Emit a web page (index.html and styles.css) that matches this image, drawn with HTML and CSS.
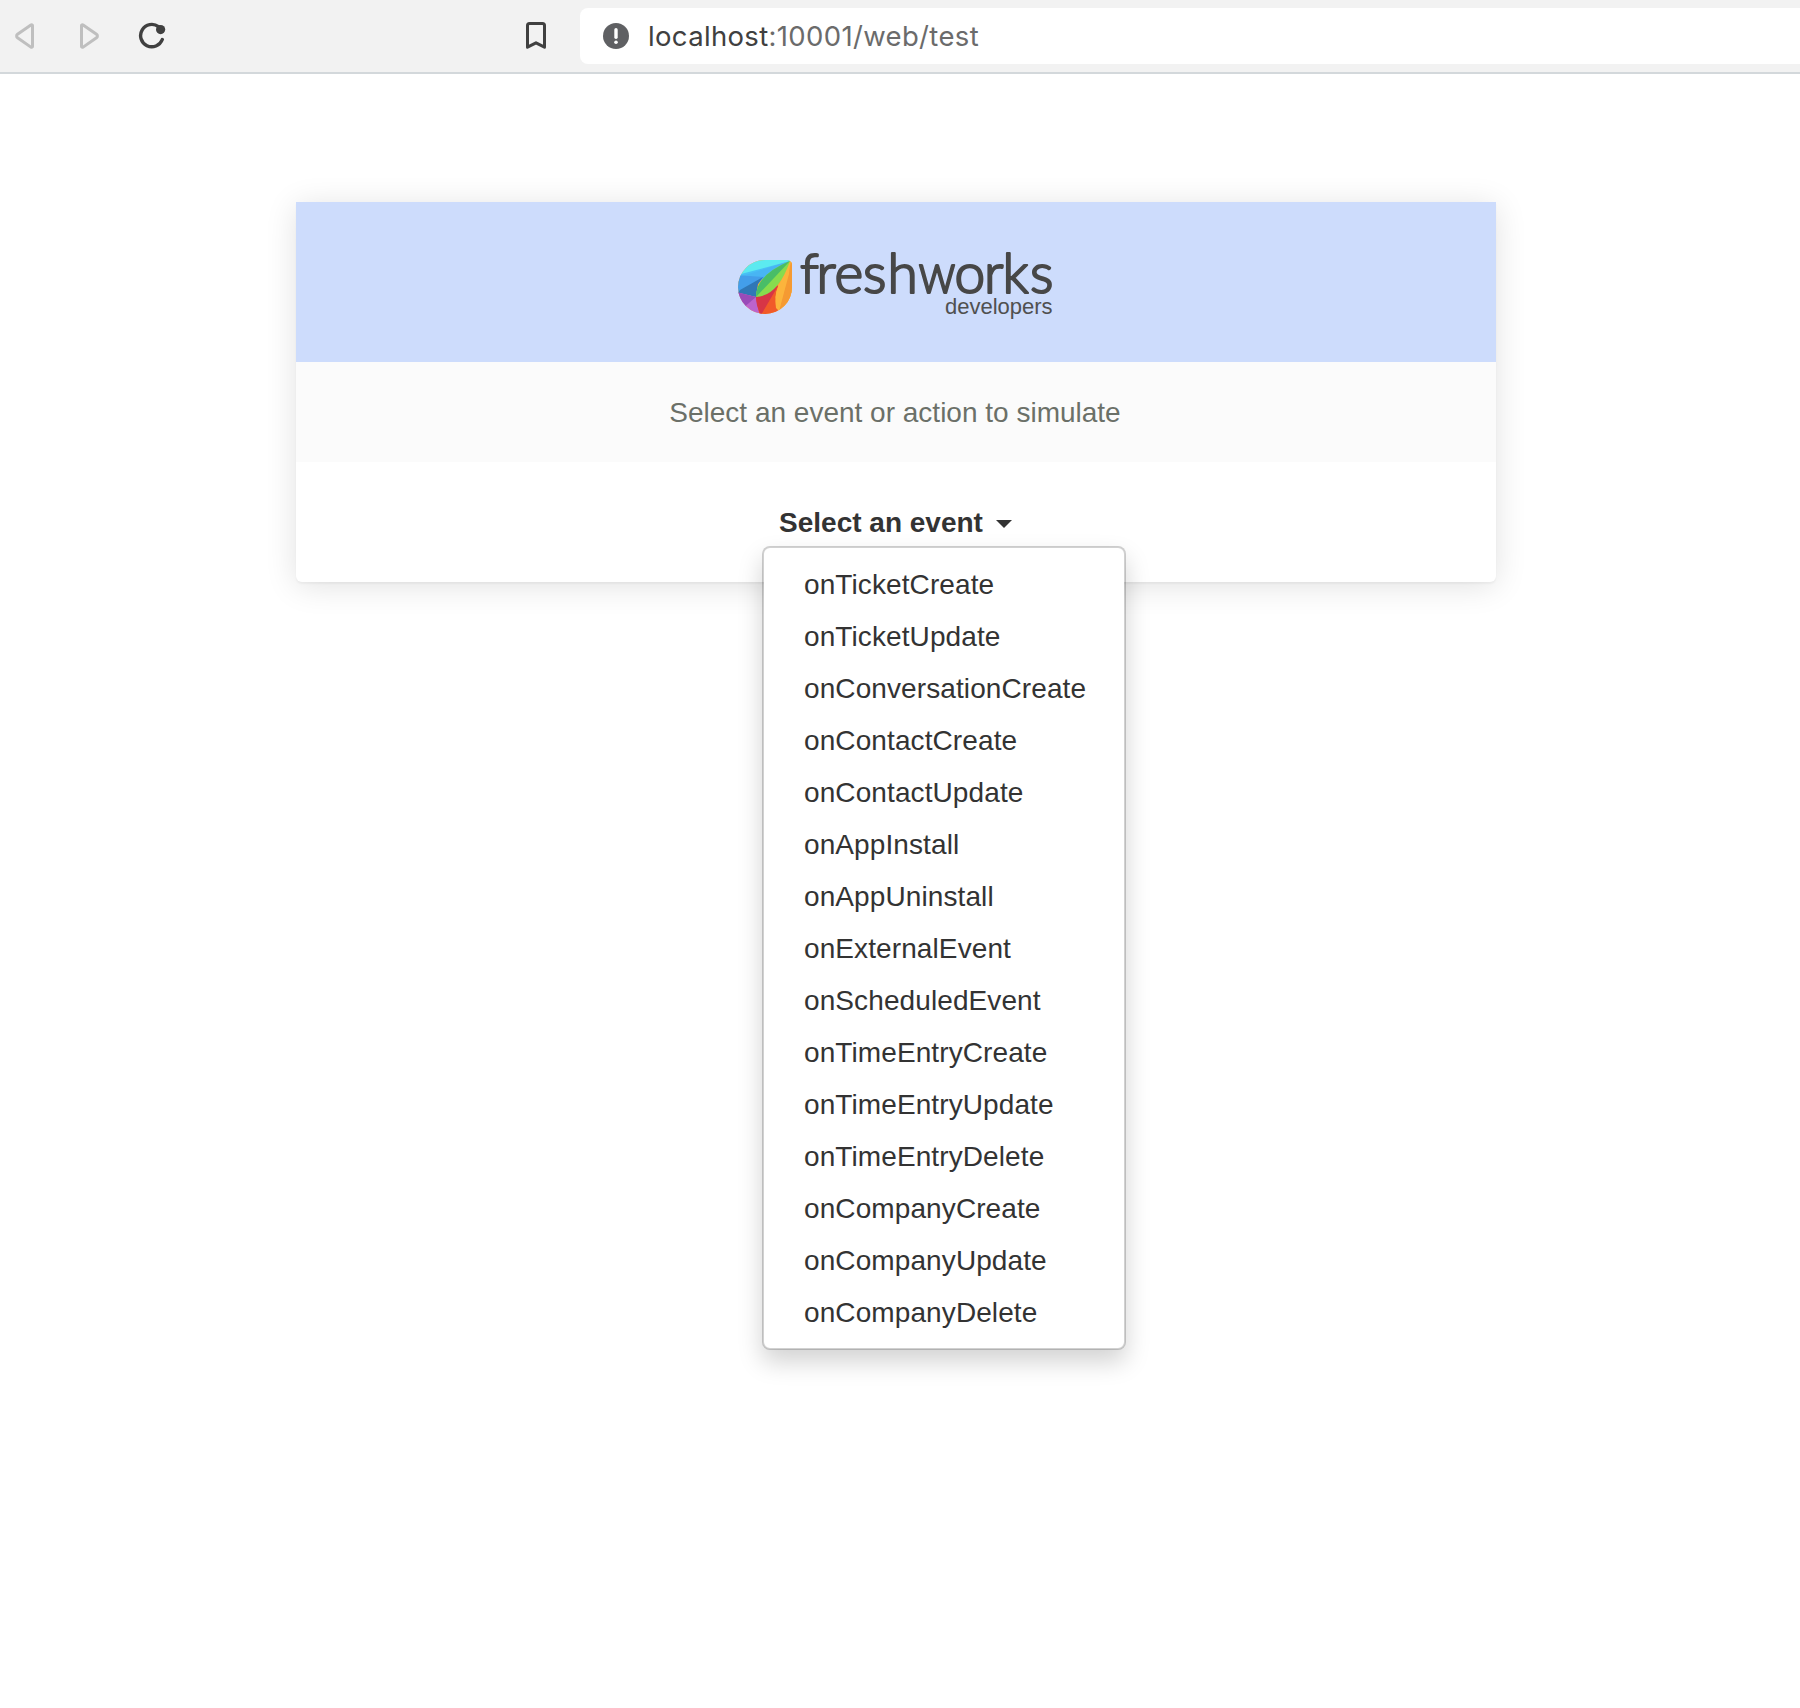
FILE: index.html
```html
<!DOCTYPE html>
<html lang="en">
<head>
<meta charset="utf-8">
<title>Freshworks Developers - Test</title>
<link rel="stylesheet" href="styles.css">
</head>
<body>
<header class="toolbar">
  <nav class="nav">
    <svg class="nav-icon" width="20" height="28" viewBox="0 0 20 28"><path d="M17.5 3.6v20.8c0 .8-.9 1.2-1.6.7L2.5 15.8c-1.2-.9-1.2-2.7 0-3.6L15.9 2.9c.7-.5 1.6-.1 1.6.7z" fill="none" stroke="#bfbfbf" stroke-width="3"/></svg>
    <svg class="nav-icon" width="20" height="28" viewBox="0 0 20 28"><path d="M2.500 3.600v20.800c0 .8.9 1.200 1.600.7l13.400-9.300c1.200-.9 1.200-2.700 0-3.600L4.100 2.900c-.7-.5-1.600-.1-1.600.7z" fill="none" stroke="#bfbfbf" stroke-width="3"/></svg>
    <svg class="nav-icon" width="28" height="28" viewBox="0 0 28 28"><path d="M20.500 4.600A11.200 11.200 0 1 0 24.300 17.500" fill="none" stroke="#404040" stroke-width="3.4" stroke-linecap="round"/><circle cx="22.6" cy="7.6" r="4.6" fill="#404040"/></svg>
  </nav>
  <svg class="bookmark" width="20" height="28" viewBox="0 0 20 28"><path d="M1.5 25.2V3.5c0-1.1.9-2 2-2h13c1.1 0 2 .9 2 2v21.7L10 20.8z" fill="none" stroke="#404040" stroke-width="3" stroke-linejoin="round"/></svg>
  <div class="address">
    <svg width="26" height="26" viewBox="0 0 26 26"><circle cx="13" cy="13" r="13" fill="#5f6063"/><path d="M13 6.8v7.4" stroke="#fff" stroke-width="3.4" stroke-linecap="round"/><circle cx="13" cy="19.3" r="1.8" fill="#fff"/></svg>
    <span class="url"><span class="host">localhost</span>:10001/web/test</span>
  </div>
</header>
<main class="card">
  <div class="brand">
    <svg width="320" height="76" viewBox="0 0 320 76" role="img" aria-label="freshworks developers">
      <defs><clipPath id="drop"><path d="M29 12H50.5Q56 12 56 17.500V38.500A27 27 0 1 1 29 12z"/></clipPath></defs>
      <g transform="translate(0 4)"><g clip-path="url(#drop)">
        <path d="M0 0H60V70H0z" fill="#f7a935"/>
        <path d="M0 0H60L54 14L5 29H0z" fill="#5ceaf0"/>
        <path d="M5 26L54 13L28 31L4 29z" fill="#48bff5"/>
        <path d="M54 13L0 30V28L28 30z" fill="#48b5f3"/>
        <path d="M0 27L28 29L22 36L4 44L0 46z" fill="#439eea"/>
        <path d="M27 29L4 42L2 45L20 49L22 36z" fill="#3077b6"/>
        <path d="M0 44L20 49L26 67H0z" fill="#bc63cc"/>
        <path d="M20 49L6 61L0 50V44z" fill="#994bb8"/>
        <path d="M20 49L42 37L43 70H24z" fill="#f15a29"/>
        <path d="M20 49L42 38L25 67Q20 58 20 49z" fill="#d73546"/>
        <path d="M54 13L42 39Q37 50 43 63L50 60L60 35V16z" fill="#fbb03b"/>
        <path d="M55 14L43 63L53 62L60 45V14z" fill="#f59a32"/>
        <path d="M54 14L42 39Q38 48 40 60L43 63L53 26z" fill="#fcb43c"/>
        <path d="M54 13Q20 27 20 49Q42 48 54 13z" fill="#87dc4e"/>
        <path d="M54 13Q20 27 20 49z" fill="#49bd67"/>
      </g></g>
      <text class="word" y="49"><tspan x="64 80.500 98.500 127 151.500">fresh</tspan><tspan x="182.500" textLength="37" lengthAdjust="spacingAndGlyphs">w</tspan><tspan x="218.500 248 266.500 294">orks</tspan></text>
      <text class="sub" x="209" y="69.500" textLength="107.500">developers</text>
    </svg>
  </div>
  <div class="hint">Select an event or action to simulate</div>
  <div class="body">
    <div class="trigger">Select an event<span class="caret"></span></div>
    <ul class="menu">
      <li>onTicketCreate</li>
      <li>onTicketUpdate</li>
      <li>onConversationCreate</li>
      <li>onContactCreate</li>
      <li>onContactUpdate</li>
      <li>onAppInstall</li>
      <li>onAppUninstall</li>
      <li>onExternalEvent</li>
      <li>onScheduledEvent</li>
      <li>onTimeEntryCreate</li>
      <li>onTimeEntryUpdate</li>
      <li>onTimeEntryDelete</li>
      <li>onCompanyCreate</li>
      <li>onCompanyUpdate</li>
      <li>onCompanyDelete</li>
    </ul>
  </div>
</main>
</body>
</html>
```

FILE: styles.css
```css
* { box-sizing: border-box; }
body {
  margin: 0;
  min-height: 1708px;
  background: #fff;
  color: #333;
  font: 28px/40px "Liberation Sans", Arial, sans-serif;
}
.toolbar {
  display: flex;
  align-items: center;
  height: 74px;
  padding-left: 15px;
  background: #f2f2f2;
  border-bottom: 2px solid #d3d8db;
}
.nav { display: flex; align-items: center; gap: 44px; }
.nav-icon:last-child { margin-left: -5px; }
.bookmark { margin-left: 360px; }
.toolbar svg { flex: none; display: block; }
.address {
  display: flex;
  align-items: center;
  gap: 19px;
  flex: 1;
  height: 56px;
  margin-left: 34px;
  padding-left: 23px;
  background: #fff;
  border-radius: 8px 0 0 8px;
}
.url {
  color: #6b6b6b;
  font-family: Inter, sans-serif;
  font-size: 27.5px;
  letter-spacing: .34px;
  white-space: nowrap;
}
.host { color: #404040; }
.card {
  width: 1200px;
  margin: 128px 0 0 296px;
  background: #fff;
  border-radius: 0 0 6px 6px;
  box-shadow: 0 2px 2px rgba(0, 0, 0, .04), 0 4px 32px rgba(0, 0, 0, .12);
}
.brand {
  display: flex;
  justify-content: center;
  align-items: center;
  height: 160px;
  background: #cddcfc;
}
.brand svg { display: block; overflow: visible; }
.word {
  font: 300 55px Lato, sans-serif;
  fill: #474747;
  stroke: #474747;
  stroke-width: 2.2;
  stroke-linejoin: round;
}
.sub { font: 22px "Liberation Sans", Arial, sans-serif; fill: #505050; }
.hint {
  display: flex;
  justify-content: center;
  align-items: center;
  height: 100px;
  padding: 2px 2px 0 0;
  background: #fbfbfb;
  color: #6b7068;
}
.body {
  position: relative;
  display: flex;
  justify-content: center;
  align-items: center;
  height: 120px;
}
.trigger {
  display: flex;
  align-items: center;
  gap: 13px;
  padding: 2px 1px 0 0;
  font-weight: bold;
}
.caret {
  border: 8px solid transparent;
  border-top-color: #333;
  border-bottom-width: 0;
  margin-top: 2px;
}
.menu {
  position: absolute;
  top: 84px;
  left: 466px;
  width: 364px;
  margin: 0;
  padding: 11px 0 9px;
  list-style: none;
  background: #fff;
  background-clip: padding-box;
  border: 2px solid rgba(0, 0, 0, .18);
  border-radius: 8px;
  box-shadow: 0 12px 24px rgba(0, 0, 0, .175);
}
.menu li { padding: 6px 40px; letter-spacing: .1px; }
```
